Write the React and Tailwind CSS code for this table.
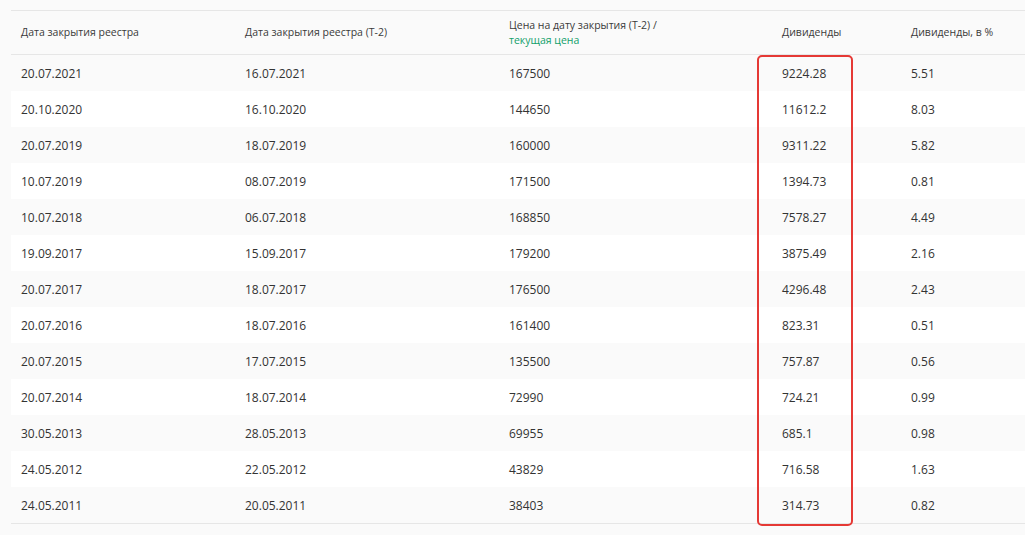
import React from 'react';

const rows = [
    ['20.07.2021', '16.07.2021', '167500', '9224.28', '5.51'],
    ['20.10.2020', '16.10.2020', '144650', '11612.2', '8.03'],
    ['20.07.2019', '18.07.2019', '160000', '9311.22', '5.82'],
    ['10.07.2019', '08.07.2019', '171500', '1394.73', '0.81'],
    ['10.07.2018', '06.07.2018', '168850', '7578.27', '4.49'],
    ['19.09.2017', '15.09.2017', '179200', '3875.49', '2.16'],
    ['20.07.2017', '18.07.2017', '176500', '4296.48', '2.43'],
    ['20.07.2016', '18.07.2016', '161400', '823.31', '0.51'],
    ['20.07.2015', '17.07.2015', '135500', '757.87', '0.56'],
    ['20.07.2014', '18.07.2014', '72990', '724.21', '0.99'],
    ['30.05.2013', '28.05.2013', '69955', '685.1', '0.98'],
    ['24.05.2012', '22.05.2012', '43829', '716.58', '1.63'],
    ['24.05.2011', '20.05.2011', '38403', '314.73', '0.82'],
];

const widths = ['w-[224px]', 'w-[264px]', 'w-[273px]', 'w-[129px]', 'flex-1'];

const Cell = ({ i, children }) => {
    return <div className={'pl-[10px] ' + widths[i]}>{children}</div>;
};

export default function App() {
    return (
        <div
            className="w-[1025px] h-[535px] bg-[#fafafa] pt-[10px] pl-[11px] text-[#333]"
            style={{ fontFamily: '"Open Sans", "Noto Sans", sans-serif' }}
        >
            <div className="relative">
                <div className="flex items-center h-[45px] border-y border-[#e6e6e6] text-[10.5px] leading-[15px] text-[#3a3a3a]">
                    <Cell i={0}>Дата закрытия реестра</Cell>
                    <Cell i={1}>Дата закрытия реестра (Т-2)</Cell>
                    <Cell i={2}>
                        <div>Цена на дату закрытия (Т-2) /</div>
                        <div className="text-[#12a06a]">текущая цена</div>
                    </Cell>
                    <Cell i={3}>Дивиденды</Cell>
                    <Cell i={4}>Дивиденды, в %</Cell>
                </div>
                <div className="border-b border-[#e6e6e6]">
                    {rows.map((row, r) => (
                        <div
                            key={row[0]}
                            className={
                                'flex items-center h-[36px] pt-px text-[12px] ' +
                                (r % 2 === 0 ? 'bg-[#fafafa]' : 'bg-white')
                            }
                        >
                            {row.map((v, i) => (
                                <Cell i={i} key={i}>
                                    {v}
                                </Cell>
                            ))}
                        </div>
                    ))}
                </div>
                <div className="absolute left-[746px] top-[45px] w-[96px] h-[471px] border-2 border-[#e53935] rounded-[5px]" />
            </div>
        </div>
    );
}
